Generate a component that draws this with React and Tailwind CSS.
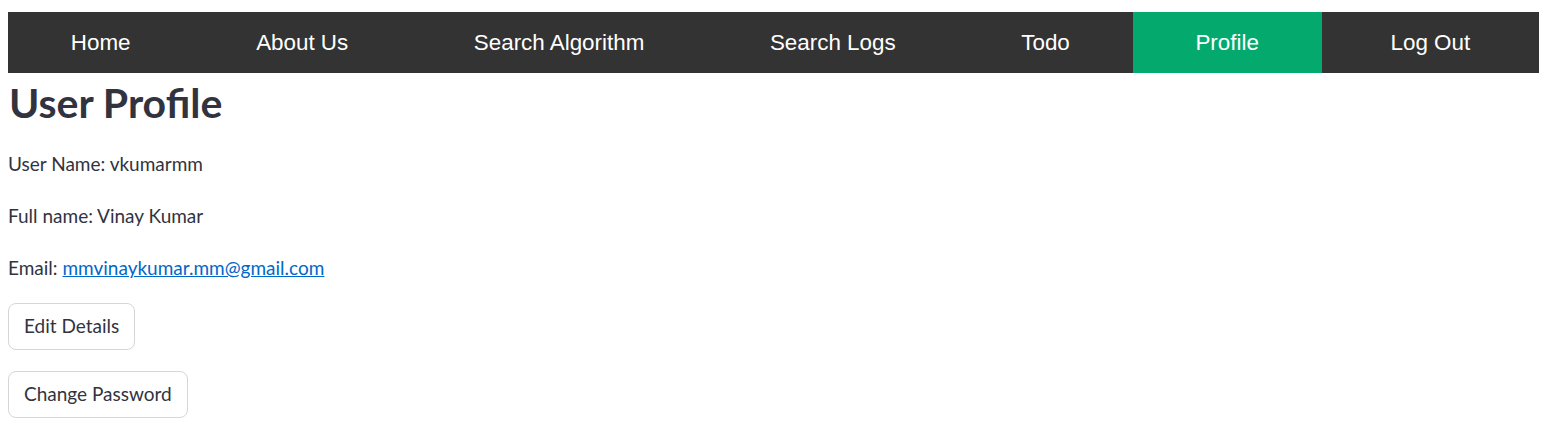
import React from "react";

const navItems = [
  { label: "Home" },
  { label: "About Us" },
  { label: "Search Algorithm" },
  { label: "Search Logs" },
  { label: "Todo" },
  { label: "Profile", active: true },
];

export default function App() {
  return (
    <div className="bg-white min-h-[446px] pt-3 pl-2 pr-[11px] text-[#31333F]" style={{ fontFamily: "Lato, 'Noto Sans', sans-serif" }}>
      <nav className="flex h-[61px] bg-[#333333]" style={{ fontFamily: "'Liberation Sans', Arial, sans-serif" }}>
        {navItems.map((it) => (
          <a
            key={it.label}
            className={`flex items-center justify-center px-[62.8px] text-[22.4px] text-white ${it.active ? "bg-[#04AA6D]" : ""}`}
          >
            {it.label}
          </a>
        ))}
        <a className="flex flex-1 items-center justify-center text-[22.4px] text-white">Log Out</a>
      </nav>
      <h1 className="mt-[6px] pl-[1px] text-[41px] leading-[48px] font-bold text-[#31333F]">User Profile</h1>
      <div className="mt-[24px] flex flex-col gap-[26px] text-[19px] leading-[26px]">
        <p>User Name: vkumarmm</p>
        <p>Full name: Vinay Kumar</p>
        <p>
          Email: <a className="text-[#0068C9] underline" href="#">mmvinaykumar.mm@gmail.com</a>
        </p>
      </div>
      <div className="mt-[22px] flex flex-col items-start gap-[21px]">
        <button className="h-[47px] px-[15px] rounded-[8px] border border-[#D6D6D9] bg-white text-[19px] text-[#31333F]">Edit Details</button>
        <button className="h-[47px] px-[15px] rounded-[8px] border border-[#D6D6D9] bg-white text-[19px] text-[#31333F]">Change Password</button>
      </div>
    </div>
  );
}
